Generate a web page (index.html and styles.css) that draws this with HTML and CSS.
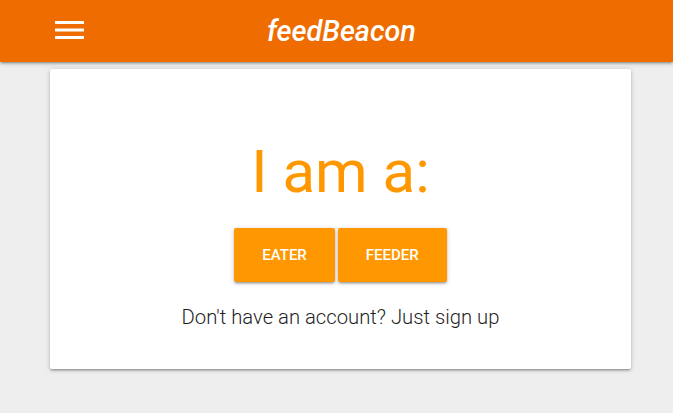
FILE: index.html
```html
<!DOCTYPE html>
<html lang="en">
<head>
<meta charset="utf-8">
<title>feedBeacon</title>
<link rel="stylesheet" href="styles.css">
</head>
<body>
<header class="nav">
  <button class="menu" aria-label="Menu">
    <svg width="29" height="18" viewBox="0 0 29 18"><rect x="0" y="0" width="29" height="3" fill="#fff"/><rect x="0" y="7.5" width="29" height="3" fill="#fff"/><rect x="0" y="15" width="29" height="3" fill="#fff"/></svg>
  </button>
  <div class="brand">feedBeacon</div>
</header>
<main class="card">
  <h1 class="title">I am a:</h1>
  <div class="actions">
    <a class="btn" href="#">Eater</a>
    <a class="btn" href="#">Feeder</a>
  </div>
  <p class="signup">Don't have an account? Just sign up</p>
</main>
</body>
</html>
```

FILE: styles.css
```css
html, body {
  margin: 0;
  padding: 0;
}
body {
  background: #eeeeee;
  font-family: Roboto, "Noto Sans", sans-serif;
  width: 673px;
  height: 413px;
  overflow: hidden;
}
.nav {
  height: 62px;
  background: #ef6c00;
  display: flex;
  align-items: center;
  justify-content: center;
  position: relative;
  box-shadow: 0 2px 2px 0 rgba(0,0,0,.14), 0 3px 1px -2px rgba(0,0,0,.12), 0 1px 5px 0 rgba(0,0,0,.2);
  z-index: 2;
}
.menu {
  position: absolute;
  left: 55px;
  top: 21px;
  padding: 0;
  margin: 0;
  border: 0;
  background: none;
  line-height: 0;
}
.brand {
  color: #fff;
  font-style: italic;
  font-weight: 500;
  font-size: 28.8px;
  line-height: 62px;
  margin-left: 10px;
}
.card {
  display: block;
  margin: 7px 0 0 50px;
  width: 581px;
  box-sizing: border-box;
  padding: 70px 0 37px;
  background: #fff;
  border-radius: 2px;
  box-shadow: 0 2px 2px 0 rgba(0,0,0,.14), 0 3px 1px -2px rgba(0,0,0,.12), 0 1px 5px 0 rgba(0,0,0,.2);
  text-align: center;
}
.title {
  margin: 0;
  font-size: 60px;
  line-height: 66px;
  font-weight: 400;
  color: #ff9800;
}
.actions {
  display: flex;
  justify-content: center;
  gap: 3px;
  margin-top: 23px;
}
.btn {
  display: block;
  height: 54px;
  line-height: 54px;
  padding: 0 28px;
  background: #ff9800;
  color: #fff;
  text-decoration: none;
  text-transform: uppercase;
  font-size: 15px;
  font-weight: 500;
  letter-spacing: 0;
  border-radius: 2px;
  box-shadow: 0 2px 2px 0 rgba(0,0,0,.14), 0 3px 1px -2px rgba(0,0,0,.12), 0 1px 5px 0 rgba(0,0,0,.2);
}
.signup {
  margin: 20px 0 0;
  font-size: 20.25px;
  line-height: 30px;
  font-weight: 300;
  color: #1f1f1f;
}
```
